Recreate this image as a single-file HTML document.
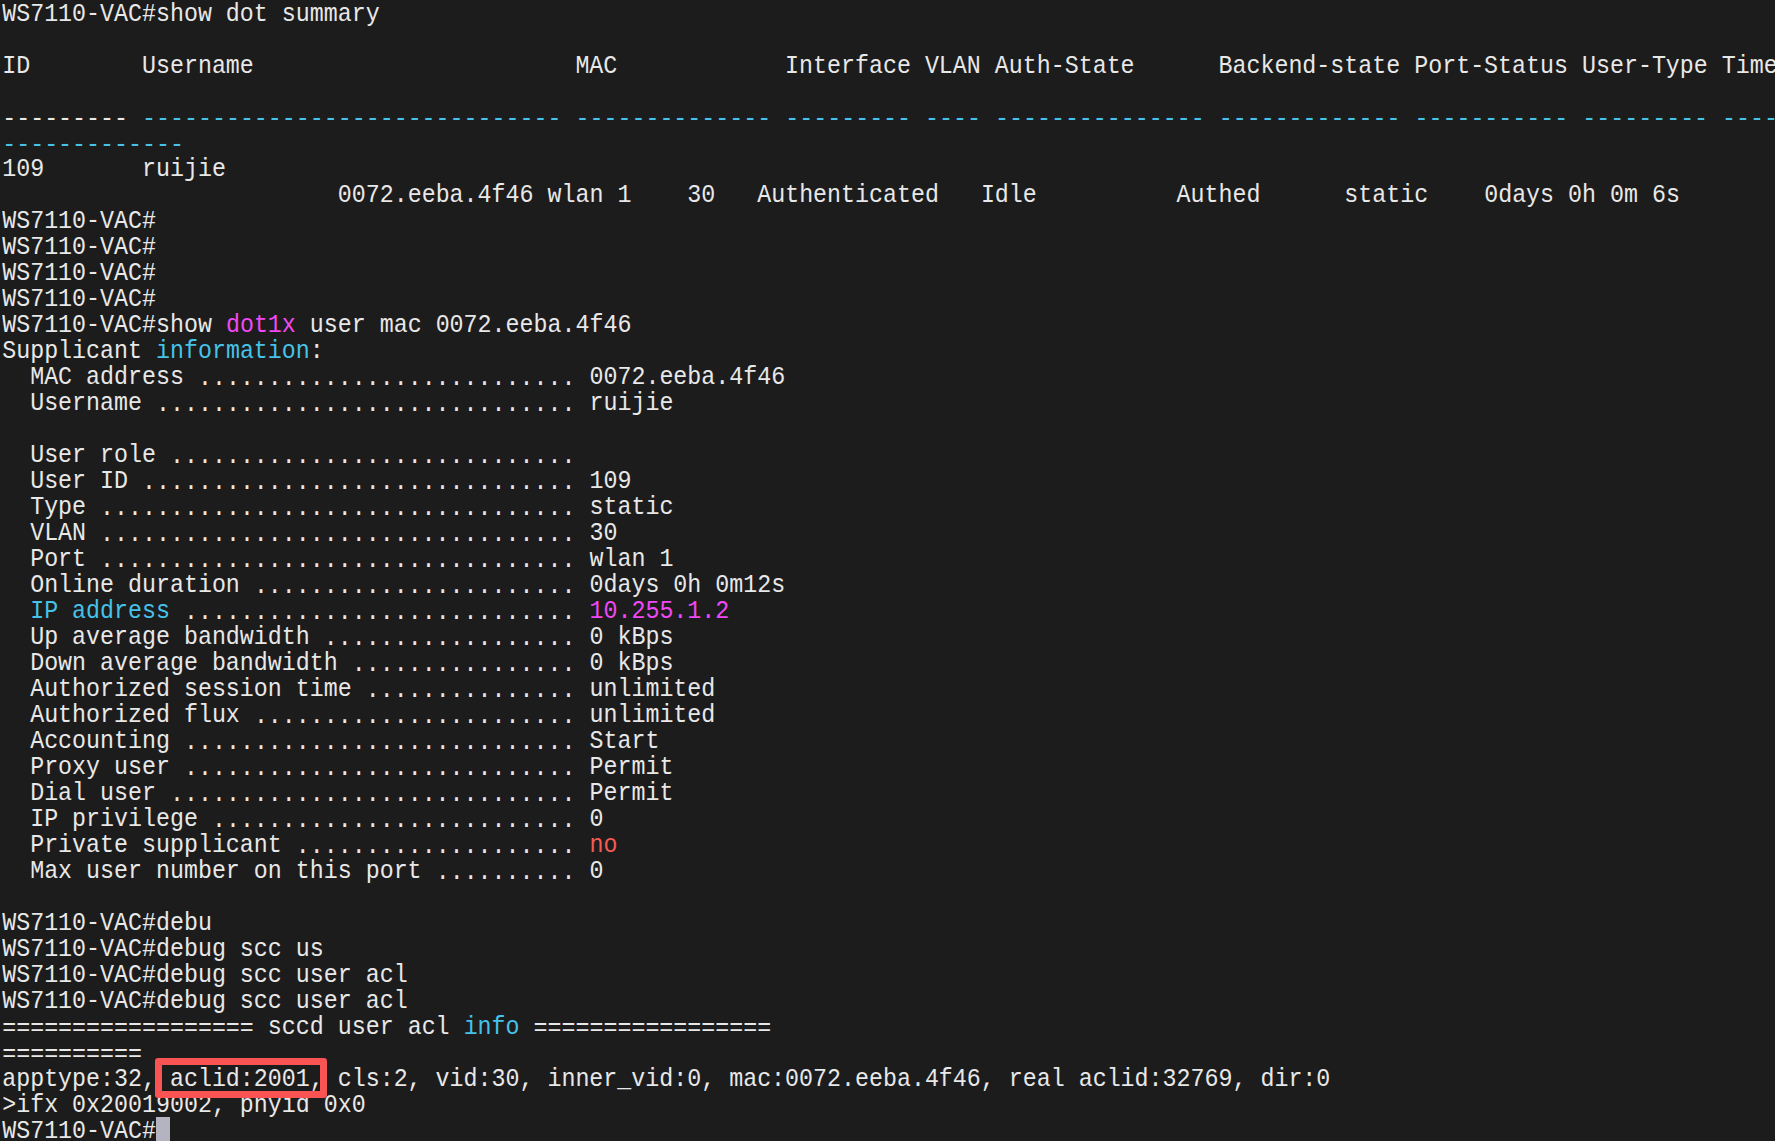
<!DOCTYPE html>
<html><head><meta charset="utf-8"><style>
html,body{margin:0;padding:0;background:#1c1c1c;width:1775px;height:1141px;overflow:hidden;position:relative}
.t{position:absolute;white-space:pre;font-family:"Liberation Mono",monospace;font-size:23.3px;line-height:26px;height:26px;transform:scaleY(1.09);transform-origin:0 19.2px}
.cur{position:absolute;background:#b4b4c0}
.box{position:absolute;border:7px solid #f95353;border-radius:3px;box-sizing:border-box}
</style></head><body>
<div class="t" style="top:1.60px;left:2.20px;color:#e8e8e8">WS7110-VAC#show dot summary</div>
<div class="t" style="top:53.56px;left:2.20px;color:#e8e8e8">ID        Username                       MAC            Interface VLAN Auth-State      Backend-state Port-Status User-Type Time</div>
<div class="t" style="top:107.02px;left:2.20px;color:#e8e8e8">---------</div>
<div class="t" style="top:107.02px;left:142.03px;color:#46c2e8">------------------------------</div>
<div class="t" style="top:107.02px;left:575.50px;color:#46c2e8">--------------</div>
<div class="t" style="top:107.02px;left:785.25px;color:#46c2e8">---------</div>
<div class="t" style="top:107.02px;left:925.08px;color:#46c2e8">----</div>
<div class="t" style="top:107.02px;left:994.99px;color:#46c2e8">---------------</div>
<div class="t" style="top:107.02px;left:1218.72px;color:#46c2e8">-------------</div>
<div class="t" style="top:107.02px;left:1414.48px;color:#46c2e8">-----------</div>
<div class="t" style="top:107.02px;left:1582.28px;color:#46c2e8">---------</div>
<div class="t" style="top:107.02px;left:1722.11px;color:#46c2e8">----</div>
<div class="t" style="top:133.00px;left:2.20px;color:#46c2e8">-------------</div>
<div class="t" style="top:157.48px;left:2.20px;color:#e8e8e8">109       ruijie</div>
<div class="t" style="top:183.46px;left:337.79px;color:#e8e8e8">0072.eeba.4f46 wlan 1    30   Authenticated   Idle          Authed      static    0days 0h 0m 6s</div>
<div class="t" style="top:209.44px;left:2.20px;color:#e8e8e8">WS7110-VAC#</div>
<div class="t" style="top:235.42px;left:2.20px;color:#e8e8e8">WS7110-VAC#</div>
<div class="t" style="top:261.40px;left:2.20px;color:#e8e8e8">WS7110-VAC#</div>
<div class="t" style="top:287.38px;left:2.20px;color:#e8e8e8">WS7110-VAC#</div>
<div class="t" style="top:313.36px;left:2.20px;color:#e8e8e8">WS7110-VAC#show </div>
<div class="t" style="top:313.36px;left:225.93px;color:#f048f4">dot1x</div>
<div class="t" style="top:313.36px;left:295.84px;color:#e8e8e8"> user mac 0072.eeba.4f46</div>
<div class="t" style="top:339.34px;left:2.20px;color:#e8e8e8">Supplicant </div>
<div class="t" style="top:339.34px;left:156.01px;color:#46c2e8">information</div>
<div class="t" style="top:339.34px;left:309.83px;color:#e8e8e8">:</div>
<div class="t" style="top:365.32px;left:2.20px;color:#e8e8e8">  MAC address</div>
<div class="t" style="top:366.32px;left:183.98px;color:#e8e8e8"> ...........................</div>
<div class="t" style="top:365.32px;left:589.49px;color:#e8e8e8">0072.eeba.4f46</div>
<div class="t" style="top:391.30px;left:2.20px;color:#e8e8e8">  Username</div>
<div class="t" style="top:392.30px;left:142.03px;color:#e8e8e8"> ..............................</div>
<div class="t" style="top:391.30px;left:589.49px;color:#e8e8e8">ruijie</div>
<div class="t" style="top:443.26px;left:2.20px;color:#e8e8e8">  User role</div>
<div class="t" style="top:444.26px;left:156.01px;color:#e8e8e8"> .............................</div>
<div class="t" style="top:469.24px;left:2.20px;color:#e8e8e8">  User ID</div>
<div class="t" style="top:470.24px;left:128.05px;color:#e8e8e8"> ...............................</div>
<div class="t" style="top:469.24px;left:589.49px;color:#e8e8e8">109</div>
<div class="t" style="top:495.22px;left:2.20px;color:#e8e8e8">  Type</div>
<div class="t" style="top:496.22px;left:86.10px;color:#e8e8e8"> ..................................</div>
<div class="t" style="top:495.22px;left:589.49px;color:#e8e8e8">static</div>
<div class="t" style="top:521.20px;left:2.20px;color:#e8e8e8">  VLAN</div>
<div class="t" style="top:522.20px;left:86.10px;color:#e8e8e8"> ..................................</div>
<div class="t" style="top:521.20px;left:589.49px;color:#e8e8e8">30</div>
<div class="t" style="top:547.18px;left:2.20px;color:#e8e8e8">  Port</div>
<div class="t" style="top:548.18px;left:86.10px;color:#e8e8e8"> ..................................</div>
<div class="t" style="top:547.18px;left:589.49px;color:#e8e8e8">wlan 1</div>
<div class="t" style="top:573.16px;left:2.20px;color:#e8e8e8">  Online duration</div>
<div class="t" style="top:574.16px;left:239.91px;color:#e8e8e8"> .......................</div>
<div class="t" style="top:573.16px;left:589.49px;color:#e8e8e8">0days 0h 0m12s</div>
<div class="t" style="top:599.14px;left:2.20px;color:#46c2e8">  IP address</div>
<div class="t" style="top:600.14px;left:170.00px;color:#e8e8e8"> ............................</div>
<div class="t" style="top:599.14px;left:589.49px;color:#f048f4">10.255.1.2</div>
<div class="t" style="top:625.12px;left:2.20px;color:#e8e8e8">  Up average bandwidth</div>
<div class="t" style="top:626.12px;left:309.83px;color:#e8e8e8"> ..................</div>
<div class="t" style="top:625.12px;left:589.49px;color:#e8e8e8">0 kBps</div>
<div class="t" style="top:651.10px;left:2.20px;color:#e8e8e8">  Down average bandwidth</div>
<div class="t" style="top:652.10px;left:337.79px;color:#e8e8e8"> ................</div>
<div class="t" style="top:651.10px;left:589.49px;color:#e8e8e8">0 kBps</div>
<div class="t" style="top:677.08px;left:2.20px;color:#e8e8e8">  Authorized session time</div>
<div class="t" style="top:678.08px;left:351.77px;color:#e8e8e8"> ...............</div>
<div class="t" style="top:677.08px;left:589.49px;color:#e8e8e8">unlimited</div>
<div class="t" style="top:703.06px;left:2.20px;color:#e8e8e8">  Authorized flux</div>
<div class="t" style="top:704.06px;left:239.91px;color:#e8e8e8"> .......................</div>
<div class="t" style="top:703.06px;left:589.49px;color:#e8e8e8">unlimited</div>
<div class="t" style="top:729.04px;left:2.20px;color:#e8e8e8">  Accounting</div>
<div class="t" style="top:730.04px;left:170.00px;color:#e8e8e8"> ............................</div>
<div class="t" style="top:729.04px;left:589.49px;color:#e8e8e8">Start</div>
<div class="t" style="top:755.02px;left:2.20px;color:#e8e8e8">  Proxy user</div>
<div class="t" style="top:756.02px;left:170.00px;color:#e8e8e8"> ............................</div>
<div class="t" style="top:755.02px;left:589.49px;color:#e8e8e8">Permit</div>
<div class="t" style="top:781.00px;left:2.20px;color:#e8e8e8">  Dial user</div>
<div class="t" style="top:782.00px;left:156.01px;color:#e8e8e8"> .............................</div>
<div class="t" style="top:781.00px;left:589.49px;color:#e8e8e8">Permit</div>
<div class="t" style="top:806.98px;left:2.20px;color:#e8e8e8">  IP privilege</div>
<div class="t" style="top:807.98px;left:197.96px;color:#e8e8e8"> ..........................</div>
<div class="t" style="top:806.98px;left:589.49px;color:#e8e8e8">0</div>
<div class="t" style="top:832.96px;left:2.20px;color:#e8e8e8">  Private supplicant</div>
<div class="t" style="top:833.96px;left:281.86px;color:#e8e8e8"> ....................</div>
<div class="t" style="top:832.96px;left:589.49px;color:#f65a52">no</div>
<div class="t" style="top:858.94px;left:2.20px;color:#e8e8e8">  Max user number on this port</div>
<div class="t" style="top:859.94px;left:421.69px;color:#e8e8e8"> ..........</div>
<div class="t" style="top:858.94px;left:589.49px;color:#e8e8e8">0</div>
<div class="t" style="top:910.90px;left:2.20px;color:#e8e8e8">WS7110-VAC#debu</div>
<div class="t" style="top:936.88px;left:2.20px;color:#e8e8e8">WS7110-VAC#debug scc us</div>
<div class="t" style="top:962.86px;left:2.20px;color:#e8e8e8">WS7110-VAC#debug scc user acl</div>
<div class="t" style="top:988.84px;left:2.20px;color:#e8e8e8">WS7110-VAC#debug scc user acl</div>
<div class="t" style="top:1015.82px;left:2.20px;color:#e8e8e8">==================</div>
<div class="t" style="top:1014.82px;left:253.89px;color:#e8e8e8"> sccd user acl </div>
<div class="t" style="top:1014.82px;left:463.64px;color:#46c2e8">info</div>
<div class="t" style="top:1015.82px;left:533.55px;color:#e8e8e8">=================</div>
<div class="t" style="top:1041.80px;left:2.20px;color:#e8e8e8">==========</div>
<div class="t" style="top:1066.78px;left:2.20px;color:#e8e8e8">apptype:32, aclid:2001, cls:2, vid:30, inner_vid:0, mac:0072.eeba.4f46, real aclid:32769, dir:0</div>
<div class="t" style="top:1092.76px;left:2.20px;color:#e8e8e8">&gt;ifx 0x20019002, phyid 0x0</div>
<div class="t" style="top:1118.74px;left:2.20px;color:#e8e8e8">WS7110-VAC#</div>
<div class="cur" style="left:156px;top:1117px;width:14px;height:30px"></div>
<div class="box" style="left:155px;top:1058px;width:172px;height:40px"></div>
</body></html>
